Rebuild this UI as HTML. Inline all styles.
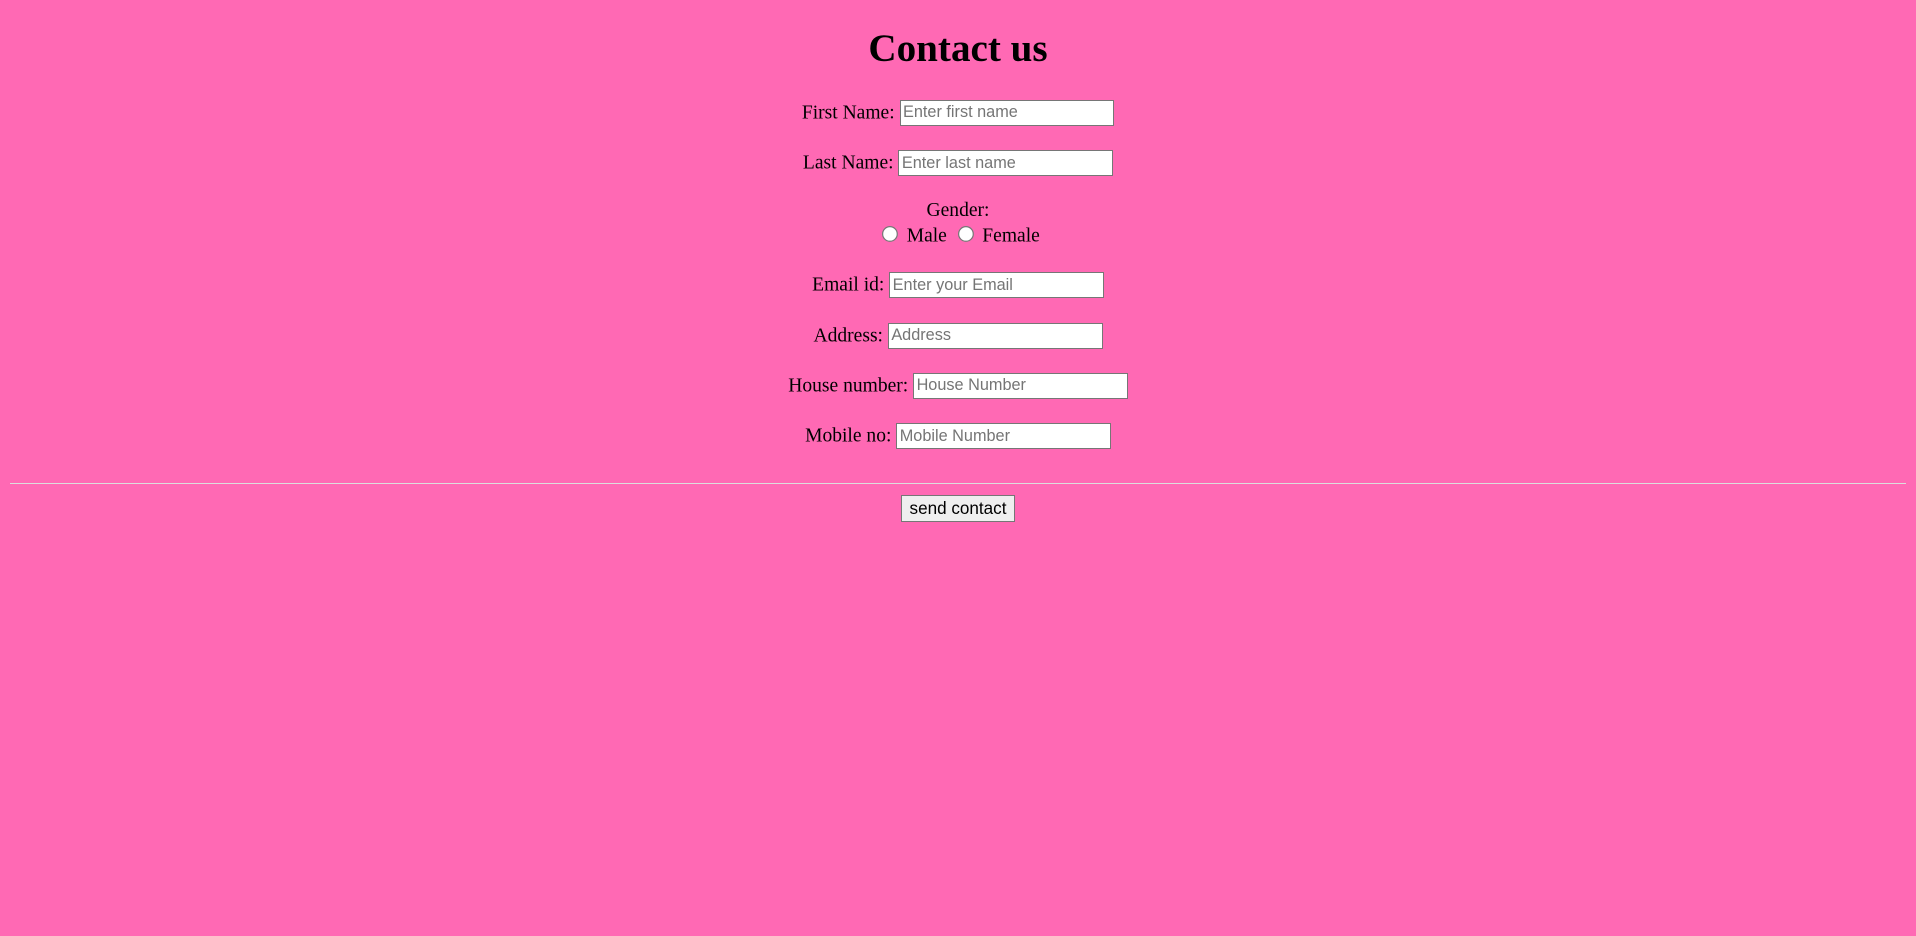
<!DOCTYPE html>
<html><head><style>
html{zoom:1.222;}
body{background:#ff69b4;margin:8px;font-family:"Liberation Serif",serif;font-size:16px;}
h1{text-align:center;font-size:2em;margin:.67em 0 23.4px;}
form{text-align:center;}
p{margin:20px 0;}
input[type=text]{font-family:"Liberation Sans",sans-serif;font-size:13.33px;width:170px;padding:2px 2px 2px;border:1px solid #767676;vertical-align:1px;}
input[type=radio]{margin:3px 3px 0 5px;}
hr{margin:28px 0 8px;border:0;border-top:1px solid #ddd;}
button{font-family:"Liberation Sans",sans-serif;font-size:14px;padding:2px 6px;border:1px solid #767676;background:#efefef;border-radius:0;margin-top:1px;}
</style></head><body>
<h1>Contact us</h1>
<form>
<p>First Name: <input type="text" placeholder="Enter first name"></p>
<p>Last Name: <input type="text" placeholder="Enter last name"></p>
<p>Gender:<br><input type="radio" name="g"> Male <input type="radio" name="g"> Female</p>
<p>Email id: <input type="text" placeholder="Enter your Email"></p>
<p>Address: <input type="text" placeholder="Address"></p>
<p>House number: <input type="text" placeholder="House Number"></p>
<p>Mobile no: <input type="text" placeholder="Mobile Number"></p>
<hr>
<button type="button">send contact</button>
</form>
</body></html>
